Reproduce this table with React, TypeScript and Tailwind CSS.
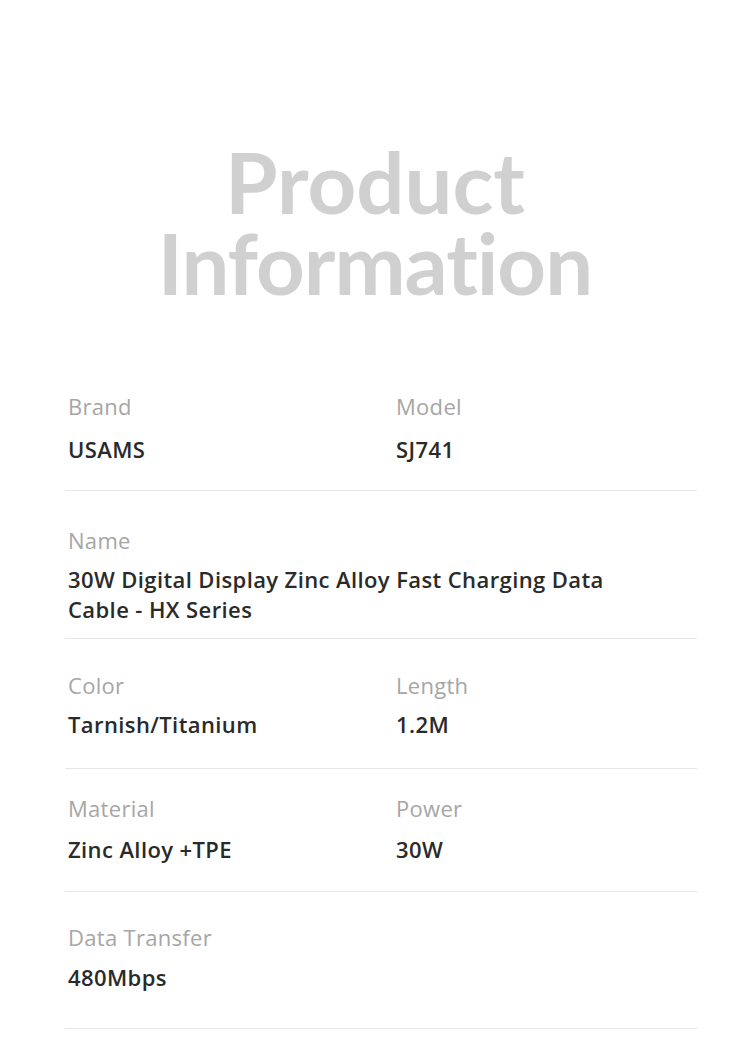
type Field = { label: string; value: string };

type Row = {
  fields: Field[];
  pad: string;
  gap: string;
  wide?: boolean;
};

const rows: Row[] = [
  {
    fields: [
      { label: 'Brand', value: 'USAMS' },
      { label: 'Model', value: 'SJ741' },
    ],
    pad: 'pt-[0px] pb-[26px]',
    gap: 'mt-[13px]',
  },
  {
    fields: [{ label: 'Name', value: '30W Digital Display Zinc Alloy Fast Charging Data Cable - HX Series' }],
    pad: 'pt-[34px] pb-[14px]',
    gap: 'mt-[9px]',
    wide: true,
  },
  {
    fields: [
      { label: 'Color', value: 'Tarnish/Titanium' },
      { label: 'Length', value: '1.2M' },
    ],
    pad: 'pt-[31px] pb-[29px]',
    gap: 'mt-[9px]',
  },
  {
    fields: [
      { label: 'Material', value: 'Zinc Alloy +TPE' },
      { label: 'Power', value: '30W' },
    ],
    pad: 'pt-[24px] pb-[27px]',
    gap: 'mt-[11px]',
  },
  {
    fields: [{ label: 'Data Transfer', value: '480Mbps' }],
    pad: 'pt-[30px] pb-[36px]',
    gap: 'mt-[10px]',
  },
];

export default function App() {
  return (
    <div className="w-[750px] h-[1053px] bg-white overflow-hidden font-['Open_Sans',sans-serif]">
      <h1 className="pt-[141px] text-center font-['Lato',sans-serif] font-bold text-[85px] leading-[81px] text-[#d0d0d0] tracking-[-1px]">
        <span className="block tracking-[0px]">Product</span>
        <span className="block">Information</span>
      </h1>

      <div className="ml-[65px] w-[632px] mt-[88px]">
        {rows.map((row, i) => (
          <div key={i} className={`border-b border-[#e6e6e6] pl-[3px] ${row.pad}`}>
            <div className="grid grid-cols-[328px_1fr]">
              {row.fields.map(f => (
                <div key={f.label} className={row.wide ? 'col-span-2' : ''}>
                  <p className="text-[22px] leading-[30px] tracking-[0.3px] text-[#a6a6a6]">{f.label}</p>
                  <p
                    className={`${row.gap} text-[22px] leading-[30px] font-semibold tracking-[0.4px] text-[#2a2a2a] ${
                      row.wide ? 'max-w-[590px]' : ''
                    }`}
                  >
                    {f.value}
                  </p>
                </div>
              ))}
            </div>
          </div>
        ))}
      </div>
    </div>
  );
}
